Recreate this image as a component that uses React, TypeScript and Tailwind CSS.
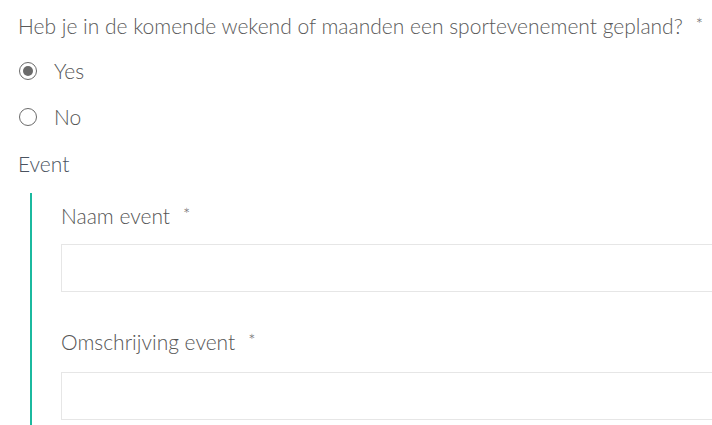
import React, { useState } from 'react';

const Required = () => <span className="ml-[13px] text-[17px] text-[#666] align-top relative top-[-1px]">*</span>;

const Radio: React.FC<{ label: string; checked: boolean; onSelect: () => void }> = ({ label, checked, onSelect }) => (
    <label className="flex items-center h-[46px] cursor-pointer" onClick={onSelect}>
        <span className="w-[18px] h-[18px] rounded-full border-[1.5px] border-[#6b6b6b] flex items-center justify-center ml-[1px]">
            {checked && <span className="w-[10px] h-[10px] rounded-full bg-[#6b6b6b]" />}
        </span>
        <span className="ml-[17px] text-[21px] text-[#555]">{label}</span>
    </label>
);

export default function App() {
    const [answer, setAnswer] = useState<'yes' | 'no'>('yes');

    return (
        <div className="w-[712px] h-[425px] overflow-hidden bg-white font-['Lato','Open_Sans',sans-serif] font-light text-[#555]">
            <div className="pl-[18px] pt-[12px]">
                <p className="text-[21px] leading-[28px] text-[#5a5a5a] whitespace-nowrap">
                    Heb je in de komende wekend of maanden een sportevenement gepland?
                    <Required />
                </p>

                <div className="mt-[8px] flex flex-col">
                    <Radio label="Yes" checked={answer === 'yes'} onSelect={() => setAnswer('yes')} />
                    <Radio label="No" checked={answer === 'no'} onSelect={() => setAnswer('no')} />
                </div>

                <p className="mt-[10px] text-[21px] leading-[28px] text-[#4a5360]">Event</p>

                {/* sub-vragen */}
                <div className="mt-[15px] ml-[12px] border-l-2 border-[#1bb99f] pl-[29px] pt-[9px] w-[800px]">
                    <p className="text-[21px] leading-[28px] whitespace-nowrap">
                        Naam event
                        <Required />
                    </p>
                    <div className="mt-[14px] h-[48px] border border-[#e6e6e6]" />

                    <p className="mt-[36px] text-[21px] leading-[28px] whitespace-nowrap">
                        Omschrijving event
                        <Required />
                    </p>
                    <div className="mt-[16px] h-[48px] border border-[#e6e6e6]" />
                    <div className="h-[20px]" />
                </div>
            </div>
        </div>
    );
}
